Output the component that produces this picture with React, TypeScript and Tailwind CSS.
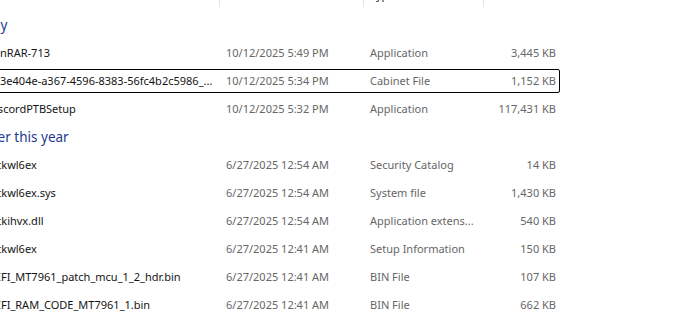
import React from "react";

type Row = { name: string; date: string; type: string; size: string; focused?: boolean };

const today: Row[] = [
  { name: "WinRAR-713", date: "10/12/2025 5:49 PM", type: "Application", size: "3,445 KB" },
  {
    name: "d93e404e-a367-4596-8383-56fc4b2c5986_...",
    date: "10/12/2025 5:34 PM",
    type: "Cabinet File",
    size: "1,152 KB",
    focused: true,
  },
  { name: "DiscordPTBSetup", date: "10/12/2025 5:32 PM", type: "Application", size: "117,431 KB" },
];

const earlier: Row[] = [
  { name: "mtkwl6ex", date: "6/27/2025 12:54 AM", type: "Security Catalog", size: "14 KB" },
  { name: "mtkwl6ex.sys", date: "6/27/2025 12:54 AM", type: "System file", size: "1,430 KB" },
  { name: "mtkihvx.dll", date: "6/27/2025 12:54 AM", type: "Application extens...", size: "540 KB" },
  { name: "mtkwl6ex", date: "6/27/2025 12:41 AM", type: "Setup Information", size: "150 KB" },
  { name: "WIFI_MT7961_patch_mcu_1_2_hdr.bin", date: "6/27/2025 12:41 AM", type: "BIN File", size: "107 KB" },
  { name: "WIFI_RAM_CODE_MT7961_1.bin", date: "6/27/2025 12:41 AM", type: "BIN File", size: "662 KB" },
];

function FileRow({ r }: { r: Row }) {
  return (
    <div className="h-[28px] py-[2px]">
      <div
        className={
          "flex h-full items-center pt-[1px] border rounded-[2px] " +
          (r.focused ? "border-black" : "border-transparent")
        }
      >
        <div className="w-[238px] shrink-0 pl-[6px] whitespace-nowrap overflow-hidden text-[#141414]">
          {r.name}
        </div>
        <div className="w-[144px] shrink-0 pl-[7px] whitespace-nowrap overflow-hidden text-[#666666]">
          {r.date}
        </div>
        <div className="w-[120px] shrink-0 pl-[7px] whitespace-nowrap overflow-hidden text-[#666666]">
          {r.type}
        </div>
        <div className="w-[76px] shrink-0 pr-[3px] text-right whitespace-nowrap overflow-hidden text-[#666666]">
          {r.size}
        </div>
      </div>
    </div>
  );
}

function GroupHeader({ label }: { label: string }) {
  return (
    <div className="h-[28px] flex items-center pt-[1px]">
      <span className="-ml-[10px] text-[13.5px] text-[#1e3991] whitespace-nowrap">{label}</span>
    </div>
  );
}

export default function App() {
  return (
    <div
      className="w-[674px] h-[319px] overflow-hidden bg-white text-[11px]"
      style={{ fontFamily: '"Noto Sans", "Open Sans", sans-serif' }}
    >
      <div className="-ml-[20px] w-[580px]">
        {/* column header, scrolled so only its bottom edge shows */}
        <div className="h-[11px] overflow-hidden flex px-[1px]">
          <div className="w-[238px] shrink-0 pl-[6px]">
            <div className="-mt-[12px] leading-[14px] text-[#1b1b1b] whitespace-nowrap">Name</div>
          </div>
          <div className="w-[144px] shrink-0 relative pl-[7px]">
            <div className="absolute left-0 top-0 h-[7px] w-px bg-[#e5e5e5]" />
            <div className="-mt-[12px] leading-[14px] text-[#1b1b1b] whitespace-nowrap">Date modified</div>
          </div>
          <div className="w-[120px] shrink-0 relative pl-[7px]">
            <div className="absolute left-0 top-0 h-[7px] w-px bg-[#e5e5e5]" />
            <div className="-mt-[12px] leading-[14px] text-[#1b1b1b] whitespace-nowrap">Type</div>
          </div>
          <div className="w-[76px] shrink-0 relative pr-[3px] text-right">
            <div className="absolute left-0 top-0 h-[7px] w-px bg-[#e5e5e5]" />
            <div className="-mt-[12px] leading-[14px] text-[#1b1b1b] whitespace-nowrap">Size</div>
          </div>
        </div>

        <GroupHeader label="Today" />
        {today.map((r, i) => (
          <FileRow key={"t" + i} r={r} />
        ))}
        <GroupHeader label="Earlier this year" />
        {earlier.map((r, i) => (
          <FileRow key={"e" + i} r={r} />
        ))}
      </div>
    </div>
  );
}
